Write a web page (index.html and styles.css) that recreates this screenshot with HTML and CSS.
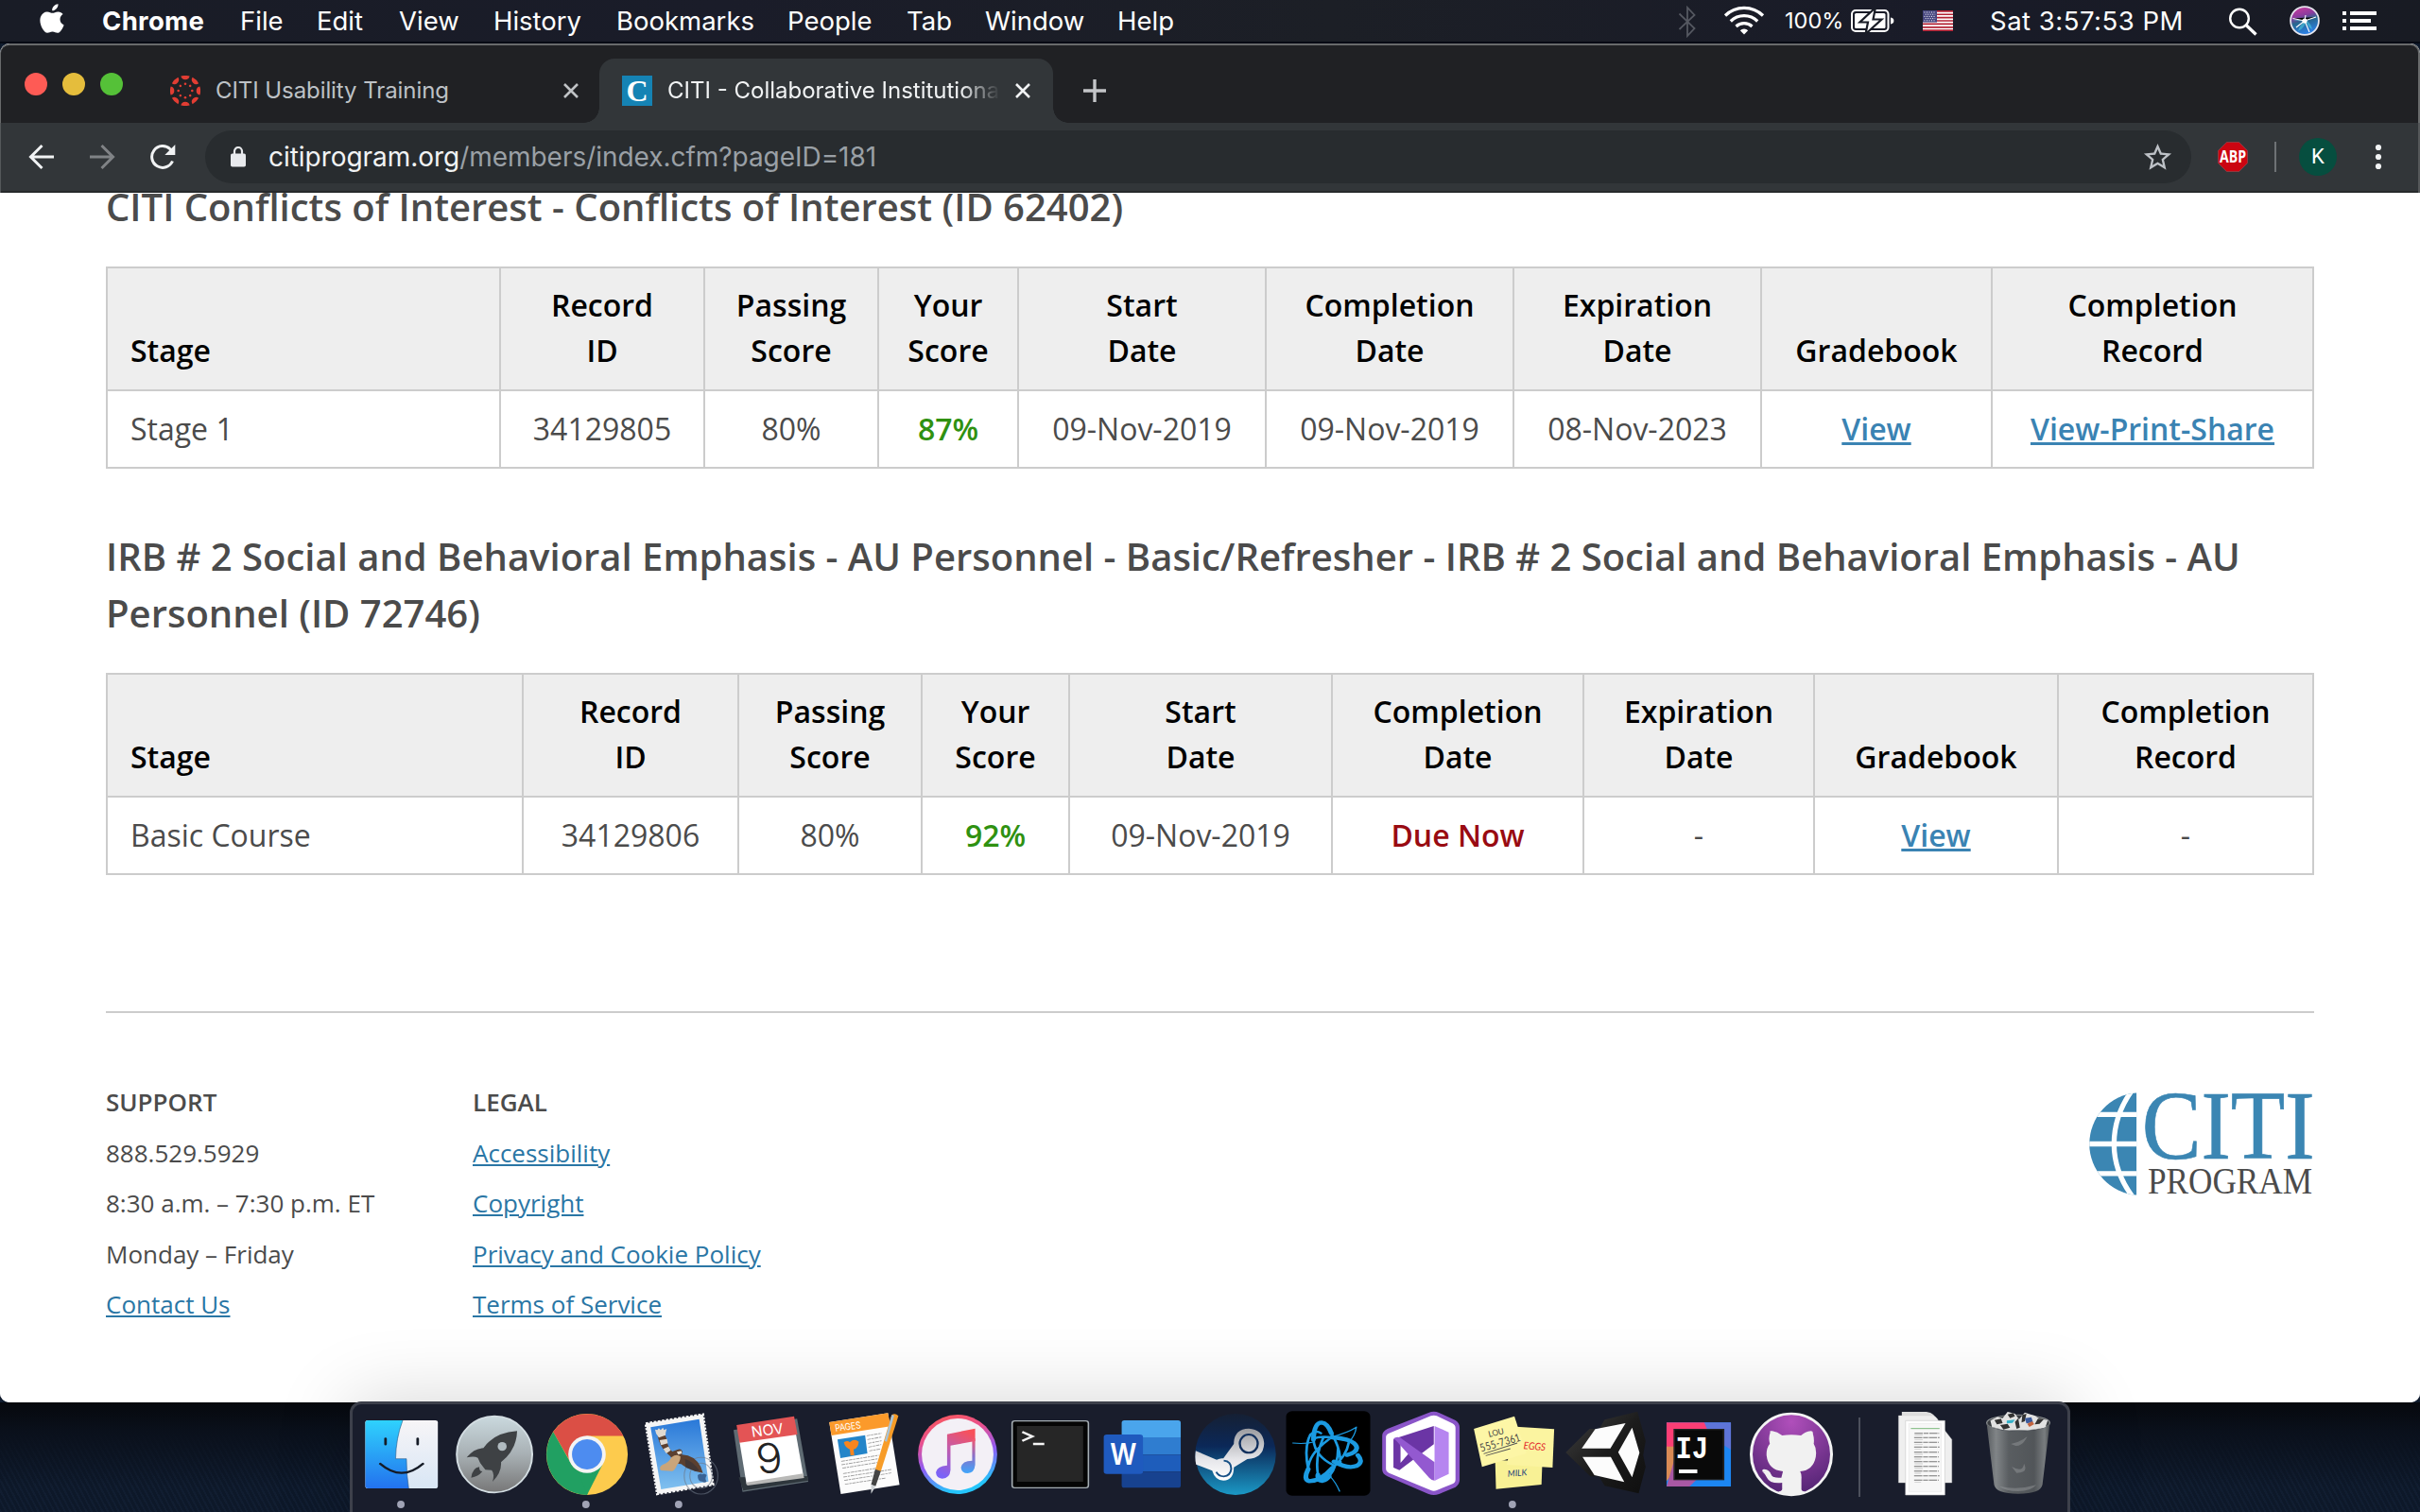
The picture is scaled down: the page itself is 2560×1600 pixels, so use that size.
FILE: index.html
```html
<!DOCTYPE html>
<html lang="en">
<head>
<meta charset="utf-8">
<title>CITI - Collaborative Institutional Training Initiative</title>
<link rel="stylesheet" href="styles.css">
</head>
<body>
<header class="menubar">
  <svg class="apple" viewBox="42 4 26 32"><path fill="#fff" d="M61.500 4.200c.3 3.700-2.900 7.100-6.300 7-.4-3.500 2.900-6.800 6.300-7zM66.600 15.100c-4.600 2.900-3.900 9.100 1 11.300-1 3-3.700 8.300-6.700 8.400-2.100 0-2.900-1.300-5.400-1.300s-3.400 1.300-5.400 1.300c-4.300-.2-9.400-10.300-7.200-16.700 1.200-3.700 4.200-5.700 7-5.700 2.400 0 4 1.400 5.700 1.400 1.600 0 3.300-1.500 6.100-1.400 1.900.1 3.800 1.100 4.900 2.700z"/></svg>
  <nav class="menus">
    <span class="app">Chrome</span><span>File</span><span>Edit</span><span>View</span><span>History</span><span>Bookmarks</span><span>People</span><span>Tab</span><span>Window</span><span>Help</span>
  </nav>
  <div class="status">
    <svg class="bt" viewBox="1774 6 22 34"><path fill="none" stroke="#555861" stroke-width="1.800" d="M1776.500 14.500l16 15.500-7.500 8V8l7.500 8-16 15"/></svg>
    <svg class="wifi" viewBox="1823 6 44 32"><g fill="none" stroke="#fff" stroke-width="3.200"><path d="M1825 16.500a28.500 28.500 0 0 1 40 0"/><path d="M1830.800 22.500a20.300 20.300 0 0 1 28.400 0"/><path d="M1836.500 28a12.500 12.500 0 0 1 17 0"/></g><path fill="#fff" d="M1840.800 32.300a6 6 0 0 1 8.400 0l-4.200 4.200z"/></svg>
    <span class="pct">100%</span>
    <svg class="battery" viewBox="1957 8 48 28"><rect x="1959" y="11" width="38.500" height="22" rx="4" fill="none" stroke="#fff" stroke-width="2"/><rect x="1962" y="14" width="32.500" height="16" rx="1.500" fill="#fff"/><path fill="#fff" d="M2000 18.500c2.600.5 3.400 1.800 3.400 3.500s-.8 3-3.400 3.500z"/><path fill="#fff" stroke="#191c26" stroke-width="2.200" d="M1984 8l-16.500 15.500h8.500L1973.500 36l17-15.500h-9z"/></svg>
    <svg class="flag" viewBox="0 0 32 22"><rect width="32" height="22" fill="#fff"/><path stroke="#b22234" stroke-width="1.700" d="M0 .85h32M0 4.240h32M0 7.620h32M0 11h32M0 14.400h32M0 17.800h32M0 21.150h32"/><rect width="15" height="12.600" fill="#46467f"/><path stroke="#fff" stroke-width="1" stroke-dasharray="1 1.500" d="M1.500 2h12.500M2.700 4.200h10.500M1.500 6.400h12.500M2.700 8.600h10.500M1.500 10.800h12.500"/></svg>
    <span class="clock">Sat 3:57:53 PM</span>
    <svg class="search" viewBox="2356 7 34 32"><circle cx="2369" cy="19.500" r="9.800" fill="none" stroke="#fff" stroke-width="2.400"/><path stroke="#fff" stroke-width="3.200" d="M2376 26.500l10.500 10"/></svg>
    <svg class="siri" viewBox="0 0 32 32"><defs><linearGradient id="siri" x1="0" y1="0" x2="0.300" y2="1"><stop offset="0" stop-color="#d93a9c"/><stop offset=".4" stop-color="#8a3c9e"/><stop offset=".6" stop-color="#27678e"/><stop offset="1" stop-color="#2b7ee0"/></linearGradient></defs><circle cx="16" cy="16" r="14.900" fill="url(#siri)" stroke="#e6e6ee" stroke-width="1.800"/><path fill="#4fd8e8" opacity=".5" d="M3 15q9 2 13 1-6 6-7 11 8-4 8-11 2 7 7 9-1-6-7-10l12-3q-6-1-13 3z"/><path stroke="#fff" stroke-width="1.100" d="M3.500 13.500L16 16l12-4M16 16l5 12M16 16l-9 7M17 10l-1 6"/><circle cx="16" cy="16" r="2.600" fill="#fff"/></svg>
    <svg class="list" viewBox="0 0 36 20"><path fill="#fff" d="M0 0h4v4H0zM8 0h28v4H8zM0 8h4v4H0zM8 8h22v4H8zM0 16h4v4H0zM8 16h28v4H8z"/></svg>
  </div>
</header>

<main class="window">
  <div class="tabstrip">
    <div class="lights"><i class="red"></i><i class="yellow"></i><i class="green"></i></div>
    <div class="tab">
      <svg class="fav" viewBox="-16 -16 32 32"><g fill="#e23d33"><g id="q"><path d="M-4.600-15.400a16 16 0 0 1 9.200 0 4.700 4.700 0 0 1-9.200 0z"/><circle cy="-7.300" r="1.300"/></g><use href="#q" transform="rotate(45)"/><use href="#q" transform="rotate(90)"/><use href="#q" transform="rotate(135)"/><use href="#q" transform="rotate(180)"/><use href="#q" transform="rotate(225)"/><use href="#q" transform="rotate(270)"/><use href="#q" transform="rotate(315)"/></g></svg>
      <span class="tab-title">CITI Usability Training</span>
      <svg class="x" viewBox="0 0 16 16"><path stroke="#c0c3c6" stroke-width="2.600" d="M1 1l14 14M15 1L1 15"/></svg>
    </div>
    <div class="tab active">
      <span class="fav citi">C</span>
      <span class="tab-title fade">CITI - Collaborative Institutional</span>
      <svg class="x" viewBox="0 0 16 16"><path stroke="#f1f3f4" stroke-width="2.600" d="M1 1l14 14M15 1L1 15"/></svg>
    </div>
    <svg class="plus" viewBox="0 0 24 24"><path stroke="#c3c5c8" stroke-width="3.400" d="M12 0v24M0 12h24"/></svg>
  </div>

  <div class="toolbar">
    <svg class="back" viewBox="0 0 28 28"><path fill="none" stroke="#f1f3f4" stroke-width="3" d="M27 14H3M14.500 2L2.500 14l12 12"/></svg>
    <svg class="fwd" viewBox="0 0 28 28"><path fill="none" stroke="#808386" stroke-width="3" d="M1 14h24M13.500 2l12 12-12 12"/></svg>
    <svg class="reload" viewBox="0 0 28 28"><path fill="none" stroke="#f1f3f4" stroke-width="3" d="M24.500 18.500A11.400 11.400 0 1 1 22 5.800l2 2"/><path fill="#f1f3f4" d="M27.300 1v11H16.300z"/></svg>
    <div class="omnibox">
      <svg class="lock" viewBox="0 0 16 22"><rect y="7.500" width="16" height="14" rx="1.800" fill="#e8eaed"/><path fill="none" stroke="#e8eaed" stroke-width="2.200" d="M4 8V5a4 4 0 0 1 8 0v3"/></svg>
      <span class="url"><b>citiprogram.org</b>/members/index.cfm?pageID=181</span>
      <svg class="star" viewBox="0 0 24 24"><path fill="#bdc1c6" d="M22 9.240l-7.190-.62L12 2 9.190 8.630 2 9.240l5.460 4.730L5.820 21 12 17.270 18.180 21l-1.630-7.030zM12 15.400l-3.760 2.270 1-4.280-3.320-2.880 4.380-.38L12 6.100l1.710 4.040 4.380.38-3.320 2.880 1 4.280z"/></svg>
    </div>
    <svg class="abp" viewBox="0 0 32 32"><path fill="#cb0511" stroke="#9a4a50" stroke-width=".7" d="M9.500.4h13L31.600 9.500v13l-9.100 9.100h-13L.4 22.500v-13z"/><text x="16" y="22" text-anchor="middle" textLength="28" lengthAdjust="spacingAndGlyphs" class="abp-t">ABP</text></svg>
    <i class="divider"></i>
    <span class="avatar">K</span>
    <svg class="dots" viewBox="0 0 8 28"><g fill="#f1f3f4"><circle cx="4" cy="4" r="3.100"/><circle cx="4" cy="14" r="3.100"/><circle cx="4" cy="24" r="3.100"/></g></svg>
  </div>

  <section class="page">
    <h2 class="first">CITI Conflicts of Interest - Conflicts of Interest (ID 62402)</h2>
    <table>
      <colgroup><col class="a1"><col class="a2"><col class="a3"><col class="a4"><col class="a5"><col class="a5"><col class="a5"><col class="a8"><col></colgroup>
      <thead><tr><th>Stage</th><th>Record<br>ID</th><th>Passing<br>Score</th><th>Your<br>Score</th><th>Start<br>Date</th><th>Completion<br>Date</th><th>Expiration<br>Date</th><th>Gradebook</th><th>Completion<br>Record</th></tr></thead>
      <tbody><tr><td>Stage 1</td><td>34129805</td><td>80%</td><td class="good">87%</td><td>09-Nov-2019</td><td>09-Nov-2019</td><td>08-Nov-2023</td><td><a>View</a></td><td><a>View-Print-Share</a></td></tr></tbody>
    </table>
    <h2>IRB # 2 Social and Behavioral Emphasis - AU Personnel - Basic/Refresher - IRB # 2 Social and Behavioral Emphasis - AU Personnel (ID 72746)</h2>
    <table>
      <colgroup><col class="b1"><col class="b2"><col class="b3"><col class="b4"><col class="b5"><col class="b6"><col class="b7"><col class="b8"><col></colgroup>
      <thead><tr><th>Stage</th><th>Record<br>ID</th><th>Passing<br>Score</th><th>Your<br>Score</th><th>Start<br>Date</th><th>Completion<br>Date</th><th>Expiration<br>Date</th><th>Gradebook</th><th>Completion<br>Record</th></tr></thead>
      <tbody><tr><td>Basic Course</td><td>34129806</td><td>80%</td><td class="good">92%</td><td>09-Nov-2019</td><td class="due">Due Now</td><td>-</td><td><a>View</a></td><td>-</td></tr></tbody>
    </table>
    <footer>
      <ul class="support"><li class="cap">SUPPORT</li><li>888.529.5929</li><li>8:30 a.m. – 7:30 p.m. ET</li><li>Monday – Friday</li><li><a>Contact Us</a></li></ul>
      <ul><li class="cap">LEGAL</li><li><a>Accessibility</a></li><li><a>Copyright</a></li><li><a>Privacy and Cookie Policy</a></li><li><a>Terms of Service</a></li></ul>
      <svg class="logo" viewBox="144 108 720 330">
        <defs><clipPath id="half"><path d="M301 109v325A163 163 0 0 1 301 109z"/></clipPath></defs>
        <g clip-path="url(#half)"><rect x="130" y="108" width="172" height="330" fill="#3b86b3"/><g fill="none" stroke="#fff" stroke-width="16"><path d="M130 178h174M130 271.500h174M130 365.500h174M287 100q-58 80-58 171.500T292 445"/></g></g>
        <g class="serif"><text x="317" y="319" textLength="549" lengthAdjust="spacingAndGlyphs" font-size="308" fill="#3b86b3" stroke="#3b86b3" stroke-width="2">CITI</text><text x="336" y="430" textLength="522" lengthAdjust="spacingAndGlyphs" font-size="120" fill="#4b4b4b">PROGRAM</text></g>
      </svg>
    </footer>
  </section>
</main>

<div class="dock-row"><div class="dock">
  <svg class="ic" viewBox="40.500 72 247.840 348" preserveAspectRatio="none"><defs><linearGradient id="fb" x2="0" y2="1"><stop stop-color="#2fd2fd"/><stop offset="1" stop-color="#2372ee"/></linearGradient><linearGradient id="fw" x2="0" y2="1"><stop stop-color="#f7f5f7"/><stop offset="1" stop-color="#d8e6f5"/></linearGradient></defs><rect x="67" y="129" width="194" height="216" rx="7" fill="url(#fw)"/><path fill="url(#fb)" d="M74 129h93q-18 55-19 122h29q0 50 6 94H74q-7 0-7-8V137q0-8 7-8z"/><path fill="none" stroke="#22507c" stroke-width="1.500" d="M167 129q-18 55-19 122h29q0 50 6 94"/><path fill="none" stroke="#151b26" stroke-width="7" stroke-linecap="round" d="M121 187v18M207 187v18M107 267q57 58 114 0"/><ellipse class="run" cx="162" cy="396" rx="10" ry="12"/></svg>
  <svg class="ic" viewBox="288.300 72 247.840 348" preserveAspectRatio="none"><defs><linearGradient id="lp" x2="0" y2="1"><stop stop-color="#cad9de"/><stop offset=".5" stop-color="#a8b0b4"/><stop offset="1" stop-color="#777"/></linearGradient></defs><ellipse cx="412.500" cy="237" rx="101" ry="121" fill="url(#lp)" stroke="#d3dde2" stroke-width="5"/><path fill="#3e4144" d="M473 163q-62 5-90 54-25 0-45 30 20-6 30 1l6 16 14 22 17 1q9 12 2 37 25-30 23-62 42-40 43-99z"/><path fill="#3e4144" d="M372 277q-18 2-22 34 20-3 30-20-9 0-8-14z"/><ellipse cx="433" cy="212" rx="12" ry="14" fill="#b1bbc0"/></svg>
  <svg class="ic" viewBox="536.100 72 247.840 348" preserveAspectRatio="none"><g transform="translate(660 237) scale(109 129)"><circle r="1" fill="#fdcb4d"/><path fill="#db4f45" d="M-.83-.55A1 1 0 0 1 .89-.455L0-.455-.4-.2-.4.2z"/><path fill="#21a062" d="M-.83-.55L-.39.230A.45.45 0 0 0 .15.430L0 1A1 1 0 0 1-.83-.55z"/><path fill="#21a062" d="M.38.25L0 1-.2.450z"/><circle r=".46" fill="#f4f4f4"/><circle r=".37" fill="#4d8cf0"/></g><ellipse class="run" cx="657" cy="396" rx="10" ry="12"/></svg>
  <svg class="ic" viewBox="783.900 72 247.840 348" preserveAspectRatio="none"><defs><linearGradient id="ml" x2="0" y2="1"><stop stop-color="#2978d8"/><stop offset="1" stop-color="#80c0ef"/></linearGradient></defs><path fill="#f5f5f5" stroke="#f5f5f5" stroke-width="7" stroke-dasharray="7 4" d="M817 139l153-29 27 223-149 30z"/><path fill="url(#ml)" d="M830 151l130-26 25 198-127 25z"/><g fill="none" stroke="#6d7786" stroke-width="3" opacity=".6"><ellipse cx="965" cy="305" rx="45" ry="58"/><ellipse cx="965" cy="305" rx="30" ry="40"/></g><path fill="#5b4030" d="M848 168q8-6 14 0 10 10 12 26 2 20 14 34l14-6q10-4 13 6l-1 10q34 2 50 38l6 20-22-6q-22-8-36-22-6-2-14-2l-6-2q-6-18-10-22-32-30-34-74z"/><path fill="#e0dad0" d="M842 158l6 2 4-6 5 6 6-8 3 8 7-4q-3 12-3 20l-18 8q-9-12-10-26zM854 192l20-4 2 14-18 6zM864 220l14-8 6 12-12 10z"/><path fill="#caa57a" d="M886 246q14-12 24-2 0 16-10 28-4 14-12 18l-30-2q-8-8 4-18 16-6 24-24z"/><path fill="#e9e2d6" d="M900 229l12-3 2 8-10 4z"/><path fill="#2d2f3b" opacity=".55" d="M922 252q20 6 38 36l-10 2-26-12z"/><path fill="#2c4f80" opacity=".8" d="M956 303q8-8 12-2 6-6 12 2-6 12 0 20-6 6-12 0-12 2-12-20z"/><ellipse class="run" cx="905" cy="396" rx="10" ry="12"/></svg>
  <svg class="ic" viewBox="1031.800 72 247.840 348" preserveAspectRatio="none"><path fill="#5f6b73" d="M1052 160l170-36 30 200-176 32z"/><path fill="#2e363c" d="M1066 310l12 42 174-32-2-14z"/><path fill="#fff" d="M1067 190l150-30 22 146-152 28z"/><path fill="#b9b9b7" d="M1086 326l152-28 3 14-152 24z"/><path fill="#e35455" d="M1060 144l154-28 9 58-155 26z"/><g class="sans"><text transform="translate(1102 182) rotate(-8) scale(.86 1)" font-size="46" fill="#fff">NOV</text><text transform="translate(1117 299) rotate(-6) scale(.95 1.050)" font-size="124" font-weight="300" fill="#222">9</text></g></svg>
  <svg class="ic" viewBox="1279.600 72 247.840 348" preserveAspectRatio="none"><path fill="#fcfcfc" d="M1308 135l157-29 31 228-157 29z"/><path fill="#fb9a2b" d="M1308 135l157-29 7 42-158 29z"/><text class="sans" transform="translate(1325 164) rotate(-8) scale(.72 1)" font-size="30" fill="#fff">PAGES</text><path fill="#2385c9" d="M1330 190l74-14 6 58-72 15z"/><path fill="#f7851e" d="M1347 199q10-8 16 0 12-14 24-2-2 22-14 24l2 18-10 2-2-20q-12-4-16-22z"/><path stroke="#9a9a9a" stroke-width="2.600" stroke-dasharray="10 2 6 2" d="M1408 178l40-8M1410 190l38-8M1412 202l36-8M1413 214l34-8M1415 226l30-6M1340 259l100-19M1341 270l98-19M1343 281l94-18M1345 298l95-18M1346 309l128-24M1348 320l126-24M1350 332l110-20"/><path fill="#f79c27" d="M1475 112q9-8 18 3l-47 176-15-5z"/><path fill="#a9c3d6" d="M1475 112l7 1-20 84-6-3z"/><path fill="#444" d="M1431 284l15 6-14 48-12-5z"/><path fill="#cfd3d6" d="M1420 333l12 5-12 24z"/></svg>
  <svg class="ic" viewBox="10.100 72 247.840 348" preserveAspectRatio="none"><defs><linearGradient id="it" x2=".3" y2="1"><stop stop-color="#ff5a4f"/><stop offset=".35" stop-color="#e85090"/><stop offset=".65" stop-color="#8f5cf5"/><stop offset="1" stop-color="#25c5fb"/></linearGradient><linearGradient id="nt" x1=".7" x2=".3" y2="1"><stop stop-color="#f8515a"/><stop offset=".45" stop-color="#c45ba8"/><stop offset="1" stop-color="#7a62f8"/></linearGradient><linearGradient id="nt2" x2="0" y2="1"><stop stop-color="#f8566a"/><stop offset=".5" stop-color="#8b6fc8"/><stop offset="1" stop-color="#3fa6fb"/></linearGradient></defs><ellipse cx="134" cy="237" rx="106" ry="126" fill="url(#it)"/><ellipse cx="134" cy="237" rx="96" ry="114" fill="#f3f0f6"/><path fill="url(#nt)" d="M106 173l75-18v40l-66 14v78q-2 26-22 27-16-1-17-20 3-20 30-22z"/><path fill="url(#nt2)" d="M173 190l8-4v84q-2 26-20 27-16 0-18-18 3-22 30-22z"/></svg>
  <svg class="ic" viewBox="258 72 247.840 348" preserveAspectRatio="none"><rect x="280" y="131" width="204" height="212" rx="7" fill="#050505" stroke="#a5adb3" stroke-width="4"/><rect x="293" y="147" width="177" height="177" fill="#262626"/><path fill="none" stroke="#f5f5f5" stroke-width="7" d="M307 166l27 14-27 14M336 204h30"/></svg>
  <svg class="ic" viewBox="505.800 72 247.840 348" preserveAspectRatio="none"><path fill="#4aa5ec" d="M580 129h144q7 0 7 8v46H573v-46q0-8 7-8z"/><path fill="#2f7dd0" d="M573 183h158v55H573z"/><path fill="#1e5dbb" d="M573 238h158v54H573z"/><path fill="#17428f" d="M573 292h158v43q0 8-7 8H580q-7 0-7-8z"/><rect x="525" y="174" width="105" height="125" rx="8" fill="#1f5abe"/><text class="sans" transform="translate(577.500 269) scale(.75 1)" font-size="93" font-weight="600" text-anchor="middle" fill="#fff">W</text></svg>
  <svg class="ic" viewBox="753.600 72 247.840 348" preserveAspectRatio="none"><defs><linearGradient id="st" x2="0" y2="1"><stop stop-color="#152034"/><stop offset=".4" stop-color="#0b2858"/><stop offset="1" stop-color="#1b99c6"/></linearGradient><linearGradient id="sg" x2="0" y2="1"><stop stop-color="#9b9ca0"/><stop offset=".6" stop-color="#e6e6ea"/><stop offset="1" stop-color="#fff"/></linearGradient></defs><ellipse cx="877.500" cy="237" rx="108" ry="129" fill="url(#st)"/><path fill="url(#sg)" d="M771 226l56 28q10-6 18-4l28-46q0-48 40-49 39 3 41 48-2 46-45 49l-36 26q0 40-28 42-22 0-30-31l-43-20q-4-22-1-43z"/><ellipse cx="913" cy="203" rx="24" ry="29" fill="none" stroke="#12305d" stroke-width="6"/><path fill="none" stroke="#164f85" stroke-width="5" d="M846 257q20 2 20 26-2 22-20 24-14 0-20-14"/></svg>
  <svg class="ic" viewBox="1001.500 72 247.840 348" preserveAspectRatio="none"><rect x="1013" y="100" width="225" height="268" rx="16"/><g fill="none" stroke="#1b9be2" stroke-linecap="round"><path stroke-width="13" d="M1086 190q2-54 22-54 16 2 26 34M1072 284q-14 34 3 38 30 0 62-42M1136 183q64 6 66 34-2 16-26 22M1205 240q16 22-4 34-24 10-60-14M1098 302q-2 20 12 19 12-4 18-14"/><path stroke-width="7" d="M1134 170q26 50 24 100M1128 307q24-34 24-90M1137 280q38-40 43-78M1086 190q10-12 50-7M1086 190q4 54 55 82M1098 302q-8-60 14-116M1072 284q-12-70 6-110 14-16 28-4M1072 284q0-50 64-102"/><path stroke-width="3.500" d="M1031 201q30 4 55-3M1201 150q-4 30-22 50M1130 306q16 20 26 48M1137 181q40-12 64-30"/></g></svg>
  <svg class="ic" viewBox="1249.300 72 247.840 348" preserveAspectRatio="none"><path fill="#8a55c8" d="M1394 105q14-7 28 0l44 24q11 9 11 22v168q0 13-11 22l-44 22q-14 6-28 0l-110-56q-14-8-14-22V178q0-14 14-22z"/><path fill="#fff" d="M1400 115q8-4 16 0l42 24q8 5 8 14v164q0 9-8 14l-42 20q-8 4-16 0l-112-55q-8-4-8-14V182q0-8 8-12z"/><path fill="#6b35a5" d="M1300 190l16-8 92-35v58l-92 82-16-8z"/><path fill="#fff" d="M1319 204l22 30-22 30zM1408 208l-30 27 30 27z"/><path fill="#9359d0" d="M1300 187q8-8 18-3l92 78v58q-8 0-14-8l-88-118z"/><path fill="#b685f0" d="M1410 147l38 20v132l-38 22z"/></svg>
  <svg class="ic" viewBox="-18.400 72 226 348" preserveAspectRatio="none"><path fill="#f8f195" d="M50 255l115 6-2 72-111 14z"/><path fill="#fbf4a0" d="M100 149l94 8-4 122-112-9z"/><path fill="#fdf6a6" d="M-2 156l99-40 29 118L18 277z"/><g class="hand"><text transform="translate(36 182) rotate(-16) scale(.8 1)" font-size="26" fill="#444">LOU</text><text transform="translate(17 229) rotate(-20) scale(.7 1)" font-size="34" fill="#444">555-7361</text><text transform="translate(119 220) scale(.7 1) rotate(4)" font-size="32" fill="#e3262c">EGGS</text><text transform="translate(81 308) scale(.75 1) rotate(-4)" font-size="28" fill="#24407b">MILK</text></g><path fill="none" stroke="#555" stroke-width="2.500" d="M22 235l82-34M27 241l60-22"/><ellipse class="run" cx="92" cy="396" rx="9" ry="12"/></svg>
  <svg class="ic" viewBox="207.500 72 226 348" preserveAspectRatio="none"><defs><linearGradient id="un" x2="1" y2="1"><stop stop-color="#404040"/><stop offset=".5" stop-color="#1c1c1c"/><stop offset="1" stop-color="#0f0f0f"/></linearGradient></defs><path fill="url(#un)" d="M222 231l58-75h24l13-29 80-26 20 94-6 44 6 38-17 84-83-24-14-30h-21z"/><path fill="#fcfcfc" d="M294 157l74-19-37 80h-70zM263 245h69l33 80-73-22zM384 152l18 80-18 78-34-80z"/></svg>
  <svg class="ic" viewBox="433.500 72 226 348" preserveAspectRatio="none"><path fill="#1c86f2" d="M468 136h157v203H468z"/><path fill="#fb3e75" d="M468 136h92l20 30-60 60h-52z"/><path fill="#d98a55" d="M468 212h20v80l-20 30z"/><path fill="#a958a4" d="M468 339l20-90 60 60-24 30z"/><path fill="#5e74d8" d="M560 136h65v86l-50-40z"/><rect x="487" y="158" width="120" height="159" fill="#090909" stroke="#222" stroke-width="4"/><text class="mono" x="490" y="248" font-size="100" textLength="80" lengthAdjust="spacingAndGlyphs" fill="#fff">IJ</text><path fill="#fff" d="M498 285h45v12h-45z"/></svg>
  <svg class="ic" viewBox="659.500 72 226 348" preserveAspectRatio="none"><defs><radialGradient id="gh" cy=".1" r=".9"><stop stop-color="#b04fbb"/><stop offset="1" stop-color="#532474"/></radialGradient><clipPath id="ghc"><ellipse cx="772.500" cy="237" rx="99" ry="129"/></clipPath></defs><ellipse cx="772.500" cy="237" rx="98" ry="129" fill="url(#gh)" stroke="#f4f4f4" stroke-width="7"/><path clip-path="url(#ghc)" fill="#f1f1f1" d="M721 167q-3-6 5-4 12 2 24 14 22-5 46 0 10-12 24-14 6 0 5 8 4 18 2 32 8 16 5 42-6 42-38 46 4 10 3 24v32q0 6 8 8l-8 16h-54l-1-16q9-2 8-10v-18q-30 4-37-16-4-12-10-18 10-3 18 10 8 10 27 8l4-20q-36-4-40-50-1-24 8-38-4-18 1-36z"/><path fill="none" stroke="#f1f1f1" stroke-width="9" stroke-linecap="round" d="M706 289q10 1 13 14 6 18 34 16"/></svg>
  <i class="sep"></i>
  <svg class="ic docs" viewBox="987 72 226 348" preserveAspectRatio="none"><path fill="#dedede" d="M1042 102h60q22 4 26 30h-86z"/><path fill="#efefef" stroke="#ccc" d="M1034 114h85q12 8 14 24l31 52v137h-130z"/><path fill="#fff" stroke="#c4c4c4" stroke-width="1.500" d="M1051 130h96v236h-96z"/><path fill="#f7f7f7" stroke="#ddd" d="M1059 139h79v217h-79z"/><path stroke="#7ab87a" stroke-width="3" d="M1064 155h70"/><path stroke="#777" stroke-width="3" stroke-dasharray="20 2 12 2" d="M1073 170h60M1072 184h62M1072 199h60M1072 214h62M1072 230h60M1072 245h60M1072 260h62M1072 275h60M1072 290h60M1072 305h62M1072 319h60"/><path stroke="#ccc" stroke-width="2.500" d="M1073 176h20M1073 190h20M1073 206h20M1073 221h16M1073 237h20M1073 252h16M1073 267h20M1073 282h20M1073 297h16M1073 325h16"/></svg>
  <svg class="ic" viewBox="1213 72 226 348" preserveAspectRatio="none"><defs><linearGradient id="tr"><stop stop-color="#5c6063"/><stop offset=".15" stop-color="#85898b"/><stop offset=".35" stop-color="#5c6063"/><stop offset=".75" stop-color="#54585b"/><stop offset=".92" stop-color="#7d8183"/><stop offset="1" stop-color="#494d50"/></linearGradient></defs><ellipse cx="1326" cy="137" rx="77" ry="25" fill="#383c40" stroke="#8a8e90" stroke-width="3"/><path fill="#e2e2e2" d="M1258 130l18-12 12 4 12-20 18 6 10 18 14-22 14 6 10 4 12 10 20 4-6 24-40 8h-60l-30-10z"/><path fill="#333" d="M1268 128l16-4 4 14-14 4zM1300 110l14-4 4 10-12 6zM1336 112l10-4-4 24-8 4zM1374 124l14 2-10 14-12 2zM1282 144l18-4 6 12-16 6zM1318 134l8-12 4 30-8 4z"/><path fill="#35b1c8" d="M1298 130l20-3-6 10-14 2z"/><path fill="#3c5b9c" d="M1342 122l16-3 4 16-16 4z"/><path fill="#c2633e" d="M1348 140l12-8 5 9-12 9z"/><path fill="url(#tr)" opacity=".96" d="M1249 139q12 24 77 24t77-24l-18 194q-4 29-59 29t-59-29z"/><path fill="#a2a6a8" opacity=".4" d="M1308 204q24-6 40-24-10 30-28 30zM1310 276q28 20 30-10 12 30-18 30zM1280 338q44 14 90-4-12 20-44 20t-46-16z"/></svg>
</div></div>
</body>
</html>
```
FILE: styles.css
```css
* { box-sizing: border-box; }

body {
  margin: 0;
  width: 2560px;
  height: 1600px;
  overflow: hidden;
  display: flex;
  flex-direction: column;
  font-family: "Open Sans", "Noto Sans", sans-serif;
  background:
    linear-gradient(#06080d 0, #0a101b 30px, transparent 90px) 0 1484px / 100% 116px no-repeat,
    repeating-linear-gradient(62deg, rgba(70, 100, 150, .07) 0 2px, transparent 2px 5px),
    #0d1829;
}
svg { display: block; flex: none; }

.menubar {
  height: 46px;
  flex: none;
  display: flex;
  background: linear-gradient(90deg, #191c26, #1a1c29 30%, #1c1f26 55%, #191b28 80%, #181b23);
  border-bottom: 2px solid #060a14;
  color: #fff;
  font: 27.500px/44px Inter, "Liberation Sans", sans-serif;
}
.apple { width: 26px; height: 32px; margin: 4px 0 0 42px; }
.menus {
  margin: 0 0 0 40px;
  display: grid;
  grid-template-columns: 146px 81px 87px 100px 130px 181px 126px 83px 140px 64px;
  white-space: nowrap;
}
.app { font-weight: 700; letter-spacing: .3px; }
.status { margin-left: auto; display: flex; align-items: flex-start; }
.bt { width: 22px; height: 34px; margin-top: 6px; }
.wifi { width: 44px; height: 32px; margin: 6px 0 0 27px; }
.pct { width: 69px; margin-left: 21px; font-size: 23.500px; line-height: 43px; }
.battery { width: 48px; height: 28px; margin-top: 8px; }
.flag { width: 32px; height: 22px; margin: 11px 0 0 29px; }
.clock { width: 251px; margin: 0 0 0 39px; letter-spacing: .5px; }
.search { width: 34px; height: 32px; margin-top: 7px; }
.siri { width: 32px; height: 32px; margin: 6px 0 0 32px; }
.list { width: 36px; height: 20px; margin: 12px 46px 0 24px; }

.window {
  height: 1438px;
  flex: none;
  display: flex;
  flex-direction: column;
  overflow: hidden;
  border-radius: 10px;
  background: #fff;
}
.tabstrip {
  height: 84px;
  flex: none;
  display: flex;
  background: #202124;
  border: solid #686a6b;
  border-width: 2px 2px 0 1px;
  border-radius: 10px 10px 0 0;
  font: 24px/32px Inter, "Liberation Sans", sans-serif;
}
.lights { display: flex; gap: 16px; margin: 29px 0 0 25px; width: 129px; }
.lights i { width: 24px; height: 24px; border-radius: 50%; }
.red { background: #fe5b55; }
.yellow { background: #e5bd3c; }
.green { background: #55c138; }
.tab {
  width: 479px;
  height: 68px;
  margin-top: 14px;
  padding: 18px 22px 0 25px;
  display: flex;
  color: #bdc1c6;
  position: relative;
}
.tab.active {
  width: 480px;
  padding: 18px 24px 0;
  color: #f1f3f4;
  background: #323639;
  border-radius: 16px 16px 0 0;
}
.tab.active::before, .tab.active::after {
  content: "";
  position: absolute;
  bottom: 0;
  width: 16px;
  height: 16px;
}
.tab.active::before { left: -16px; background: radial-gradient(circle at 0 0, transparent 15.500px, #323639 16px); }
.tab.active::after { right: -16px; background: radial-gradient(circle at 100% 0, transparent 15.500px, #323639 16px); }
.fav { width: 32px; height: 32px; flex: none; }
.citi {
  background: #1583b4;
  color: #fff;
  font: bold 32px/33px "Liberation Serif", serif;
  text-align: center;
}
.tab-title { flex: 1; margin-left: 16px; white-space: nowrap; overflow: hidden; letter-spacing: -.08px; }
.fade {
  flex: none;
  width: 350px;
  letter-spacing: 0;
  -webkit-mask-image: linear-gradient(90deg, #000 310px, transparent 352px);
  mask-image: linear-gradient(90deg, #000 310px, transparent 352px);
}
.x { width: 16px; height: 16px; margin: 8px 0 0; }
.active .x { margin-left: 18px; }
.plus { width: 24px; height: 24px; margin: 36px 0 0 32px; }

.toolbar {
  height: 74px;
  flex: none;
  display: flex;
  align-items: center;
  padding: 0 0 2px 29px;
  background: #323639;
  border: solid #55585a;
  border-width: 0 2px 0 1px;
  box-shadow: inset 0 -2px #26292b;
}
.back, .fwd, .reload { width: 28px; height: 28px; }
.fwd { margin-left: 36px; }
.reload { margin-left: 36px; }
.omnibox {
  width: 2101px;
  height: 56px;
  margin-left: 31px;
  padding: 0 18px 0 27px;
  border-radius: 28px;
  background: #282c2f;
  display: flex;
  align-items: center;
}
.lock { width: 16px; height: 22px; }
.url {
  flex: 1;
  margin-left: 24px;
  color: #9aa0a6;
  font: 28px/56px Inter, "Liberation Sans", sans-serif;
  letter-spacing: -.04px;
}
.url b { font-weight: 400; color: #f1f3f4; }
.star { width: 35px; height: 35px; }
.abp { width: 32px; height: 32px; margin-left: 28px; }
.abp-t { font: 700 17px "Open Sans", sans-serif; fill: #fff; }
.divider { width: 2px; height: 32px; margin-left: 28px; background: #6e7275; }
.avatar {
  width: 40px;
  height: 40px;
  margin-left: 24px;
  border-radius: 50%;
  background: #064e3f;
  color: #fff;
  font: 22px/40px Roboto, sans-serif;
  text-align: center;
}
.dots { width: 8px; height: 28px; margin-left: 40px; }

.page {
  flex: 1;
  min-height: 0;
  overflow: hidden;
  padding: 0 112px;
  color: #4b4b4b;
  background: #fff;
}
h2 { margin: 63px 0 33px; font-size: 40px; line-height: 60px; font-weight: 600; }
h2.first { margin-top: -15px; }
table {
  width: 2336px;
  table-layout: fixed;
  border-collapse: collapse;
  font-size: 32px;
  line-height: 48px;
}
th, td { padding: 15px 0; border: 2px solid #ccc; text-align: center; }
th { padding-bottom: 17px; background: #eee; color: #000; font-weight: 600; vertical-align: bottom; height: 130px; }
td { height: 82px; }
th:first-child, td:first-child { text-align: left; padding-left: 24px; }
.a1 { width: 416px; } .a2 { width: 216px; } .a3 { width: 184px; } .a4 { width: 148px; }
.a5 { width: 262px; } .a8 { width: 244px; }
.b1 { width: 440px; } .b2 { width: 228px; } .b3 { width: 194px; } .b4 { width: 156px; }
.b5 { width: 278px; } .b6 { width: 266px; } .b7 { width: 244px; } .b8 { width: 258px; }
a { color: #2a76a5; text-decoration: underline; }
td a { color: #3a83b3; font-weight: 600; }
.good { color: #2f9111; font-weight: 600; }
.due { color: #990b12; font-weight: 600; }

footer {
  margin-top: 144px;
  padding-top: 68px;
  border-top: 2px solid #ccc;
  display: flex;
  font-size: 26px;
  line-height: 53.500px;
}
footer ul { margin: 0; padding: 0; list-style: none; }
.support { width: 388px; }
.cap { font-weight: 600; }
.logo { width: 240px; height: 110px; margin: 16px 0 0 auto; }
.serif { font-family: "Liberation Serif", serif; }

.dock-row { display: flex; justify-content: center; margin-top: -1px; position: relative; }
.dock {
  width: 1820px;
  height: 140px;
  padding: 0 3px;
  display: flex;
  border: 3px solid #3d404b;
  border-radius: 12px;
  background: #191d2c;
  box-shadow: 0 0 80px rgba(0, 0, 0, .17);
}
.ic { width: 98px; height: 116px; margin-top: -2px; }
.sep { width: 2px; height: 84px; margin: 14px 20px 0 22px; background: #4c505c; }
.run { fill: #a0a3b5; }
.sans { font-family: Inter, sans-serif; }
.mono { font-family: "Liberation Mono", monospace; font-weight: 700; }
.hand { font-family: Lato, sans-serif; font-style: italic; }
```
